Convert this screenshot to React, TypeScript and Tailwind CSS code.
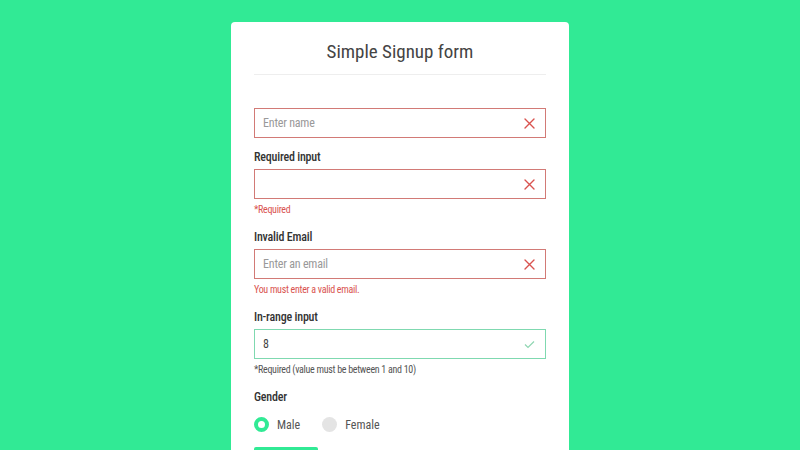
import React, { useState } from "react";

const font = {
  fontFamily:
    '"Roboto Condensed", "Liberation Sans Narrow", "DejaVu Sans Condensed", "Open Sans", sans-serif',
};

function Cross() {
  return (
    <svg width="11" height="11" viewBox="0 0 11 11" className="text-[#d9534f]">
      <path d="M1 1 L10 10 M10 1 L1 10" stroke="currentColor" strokeWidth="1.4" strokeLinecap="round" />
    </svg>
  );
}

function Check() {
  return (
    <svg width="11" height="9" viewBox="0 0 11 9" className="text-[#8fd6b2]">
      <path d="M1 4.5 L4 7.5 L10 1.5" fill="none" stroke="currentColor" strokeWidth="1.2" />
    </svg>
  );
}

function Field({ value, placeholder, valid, onChange }) {
  return (
    <div
      className={`flex items-center h-[30px] w-full border ${
        valid ? "border-[#7fd9b0]" : "border-[#d27a76]"
      }`}
    >
      <input
        className="flex-1 h-full px-2 text-[12px] tracking-[-0.2px] text-[#444] placeholder:text-[#999] bg-transparent outline-none"
        style={font}
        value={value}
        placeholder={placeholder}
        onChange={(e) => onChange(e.target.value)}
      />
      <span className="pr-[10px] flex items-center">{valid ? <Check /> : <Cross />}</span>
    </div>
  );
}

function Radio({ label, checked, onClick }) {
  return (
    <button className="flex items-center gap-[8px] h-[15px]" onClick={onClick}>
      <span
        className={`w-[15px] h-[15px] rounded-full ${
          checked ? "border-[4px] border-[#31ea95] bg-white" : "bg-[#e4e4e4]"
        }`}
      />
      {label}
    </button>
  );
}

export default function App() {
  const [name, setName] = useState("");
  const [req, setReq] = useState("");
  const [email, setEmail] = useState("");
  const [num, setNum] = useState("8");
  const [gender, setGender] = useState("male");

  return (
    <div className="w-full h-[450px] bg-[#31ea95] flex justify-center overflow-hidden" style={font}>
      <div className="mt-[22px] w-[338px] bg-white rounded-[4px] px-[23px] pt-[16px] flex flex-col self-start">
        <h1 className="text-center text-[19px] text-[#444] leading-[28px] pb-[8px] border-b border-[#eee]">
          Simple Signup form
        </h1>

        <div className="mt-[33px]">
          <Field value={name} placeholder="Enter name" valid={false} onChange={setName} />
        </div>

        <label className="mt-[11px] text-[12px] font-medium tracking-[-0.2px] text-[#333] leading-[16px]">Required input</label>
        <div className="mt-[4px]">
          <Field value={req} placeholder="" valid={false} onChange={setReq} />
        </div>
        <p className="mt-[4px] text-[10px] tracking-[-0.3px] text-[#d9534f] leading-[14px]">*Required</p>

        <label className="mt-[12px] text-[12px] font-medium tracking-[-0.2px] text-[#333] leading-[16px]">Invalid Email</label>
        <div className="mt-[4px]">
          <Field value={email} placeholder="Enter an email" valid={false} onChange={setEmail} />
        </div>
        <p className="mt-[4px] text-[10px] tracking-[-0.3px] text-[#d9534f] leading-[14px]">You must enter a valid email.</p>

        <label className="mt-[12px] text-[12px] font-medium tracking-[-0.2px] text-[#333] leading-[16px]">In-range input</label>
        <div className="mt-[4px]">
          <Field value={num} placeholder="" valid={true} onChange={setNum} />
        </div>
        <p className="mt-[4px] text-[10px] tracking-[-0.3px] text-[#555] leading-[14px]">
          *Required (value must be between 1 and 10)
        </p>

        <label className="mt-[12px] text-[12px] font-medium tracking-[-0.2px] text-[#333] leading-[16px]">Gender</label>
        <div className="mt-[12px] flex items-center gap-[22px] text-[12px] text-[#555]">
          <Radio label="Male" checked={gender === "male"} onClick={() => setGender("male")} />
          <Radio label="Female" checked={gender === "female"} onClick={() => setGender("female")} />
        </div>

        <button className="mt-[15px] w-[64px] h-[30px] bg-[#31ea95] rounded-[2px] text-white text-[12px]">
          Submit
        </button>
      </div>
    </div>
  );
}
